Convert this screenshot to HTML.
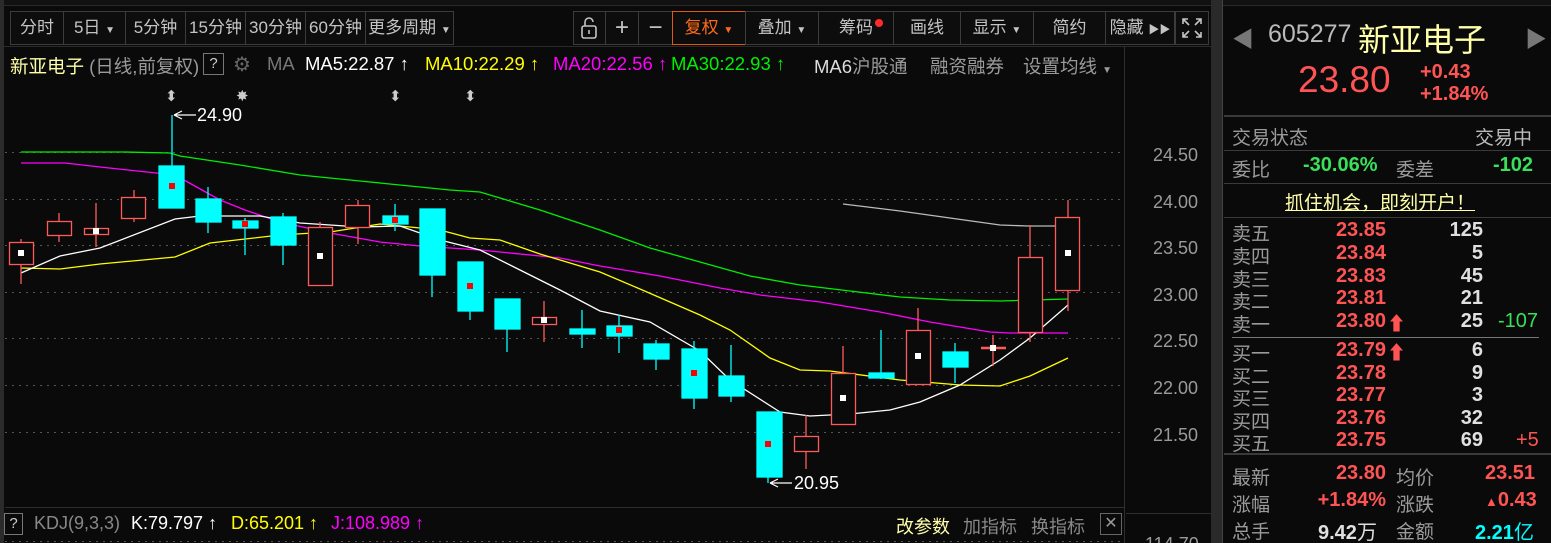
<!DOCTYPE html>
<html style="width:1551px;height:543px;overflow:hidden"><head><meta charset="utf-8"><style>
*{margin:0;padding:0;box-sizing:border-box}
body{width:1551px;height:543px;background:#0a0a0a;overflow:hidden;position:relative;font-family:"Liberation Sans","Noto Sans CJK SC",sans-serif;color:#c8c8c8}
.a{position:absolute;white-space:nowrap}
.btn{position:absolute;top:11px;height:34px;border:1px solid #3c3c3c;font-size:17px;line-height:32px;text-align:center;color:#c4c4c4;background:#0d0d0d}
.g{color:#9a9a9a}.r{color:#ff5454}.gr{color:#39e05a}
.lbl{position:absolute;font-size:19px;color:#9a9a9a;left:1232px}
.pr{position:absolute;font-size:20px;font-weight:bold;color:#ff5454;text-align:right;width:100px;left:1286px}
.vol{position:absolute;font-size:20px;font-weight:bold;color:#e0e0e0;text-align:right;width:60px;left:1423px}
.lg{position:absolute;top:53px;font-size:18.5px;white-space:nowrap}
</style></head><body>
<div class="a" style="left:0;top:0;width:1551px;height:6px;background:#111;border-bottom:1px solid #2a2a2a"></div>
<div class="a" style="left:0;top:0;width:4px;height:543px;background:#2b2b2b"></div>
<div class="btn" style="left:10px;width:54px">分时</div>
<div class="btn" style="left:63px;width:63px">5日 <span style="font-size:10px">▼</span></div>
<div class="btn" style="left:125px;width:61px">5分钟</div>
<div class="btn" style="left:185px;width:61px">15分钟</div>
<div class="btn" style="left:245px;width:61px">30分钟</div>
<div class="btn" style="left:305px;width:61px">60分钟</div>
<div class="btn" style="left:365px;width:89px">更多周期 <span style="font-size:10px">▼</span></div>
<div class="btn" style="left:573px;width:33px;font-size:20px">
<svg width="20" height="24" style="margin-top:4px" viewBox="0 0 20 24"><rect x="2" y="10" width="14" height="12" rx="2" fill="none" stroke="#c4c4c4" stroke-width="1.6"/><path d="M5 10V6a4 4 0 0 1 8 0" fill="none" stroke="#c4c4c4" stroke-width="1.6"/><path d="M9 14v4" stroke="#c4c4c4" stroke-width="1.6"/></svg></div>
<div class="btn" style="left:605px;width:34px;font-size:24px">+</div>
<div class="btn" style="left:638px;width:35px;font-size:24px">−</div>
<div class="btn" style="left:672px;width:74px;border-color:#e05a10;color:#ff6a1a">复权 <span style="font-size:10px">▼</span></div>
<div class="btn" style="left:745px;width:74px">叠加 <span style="font-size:10px">▼</span></div>
<div class="btn" style="left:818px;width:76px">筹码<span style="position:absolute;top:7px;left:56px;width:8px;height:8px;border-radius:4px;background:#ff2a2a"></span></div>
<div class="btn" style="left:893px;width:68px">画线</div>
<div class="btn" style="left:960px;width:74px">显示 <span style="font-size:10px">▼</span></div>
<div class="btn" style="left:1033px;width:73px">简约</div>
<div class="btn" style="left:1105px;width:70px">隐藏 <span style="font-size:11px">▶▶</span></div>
<div class="btn" style="left:1175px;width:34px"><svg width="22" height="22" style="margin-top:5px" viewBox="0 0 22 22" fill="none" stroke="#c4c4c4" stroke-width="1.6"><path d="M2 7V2h5M2 2l6 6M20 7V2h-5M20 2l-6 6M2 15v5h5M2 20l6-6M20 15v5h-5M20 20l-6-6"/></svg></div>
<div class="a" style="left:4px;top:46px;width:1219px;height:1px;background:#2a2a2a"></div>
<div class="lg" style="left:10px;color:#ffffa8">新亚电子 <span style="color:#9a9a9a">(日线,前复权)</span></div>
<div class="a" style="left:203px;top:53px;width:21px;height:22px;border:1px solid #777;font-size:15px;text-align:center;line-height:20px;color:#ccc">?</div>
<div class="a" style="left:233px;top:52px;font-size:20px;color:#666">⚙</div>
<div class="lg" style="left:267px;color:#777">MA</div>
<div class="lg" style="left:305px;color:#fff">MA5:22.87 ↑</div>
<div class="lg" style="left:425px;color:#ffff00">MA10:22.29 ↑</div>
<div class="lg" style="left:553px;color:#ff00ff">MA20:22.56 ↑</div>
<div class="lg" style="left:671px;color:#00f000">MA30:22.93 ↑</div>
<div class="lg" style="left:814px;color:#ddd">MA6<span style="color:#9a9a9a">沪股通</span></div>
<div class="lg" style="left:930px;color:#9a9a9a">融资融券</div>
<div class="lg" style="left:1023px;color:#9a9a9a">设置均线 <span style="font-size:10px">▼</span></div>
<div class="a" style="left:1124px;top:46px;width:1px;height:497px;background:#2e2e2e"></div>
<div class="a" style="left:1211px;top:0;width:12px;height:543px;background:#2a2a2a"></div>
<div class="a" style="left:1222px;top:0;width:1px;height:543px;background:#444"></div>
<svg class="a" style="left:0;top:0" width="1124" height="543">
<g stroke="#555" stroke-dasharray="2,5" stroke-width="1">
<line x1="5" y1="152.5" x2="1124" y2="152.5"/><line x1="5" y1="199.5" x2="1124" y2="199.5"/><line x1="5" y1="245.5" x2="1124" y2="245.5"/><line x1="5" y1="292.5" x2="1124" y2="292.5"/><line x1="5" y1="338.5" x2="1124" y2="338.5"/><line x1="5" y1="385.5" x2="1124" y2="385.5"/><line x1="5" y1="432.5" x2="1124" y2="432.5"/>
<line x1="5" y1="541.5" x2="1124" y2="541.5"/></g>
<line x1="5" y1="507.5" x2="1124" y2="507.5" stroke="#2e2e2e"/>
<g fill="none" stroke-width="1.3">
<polyline stroke="#00ee00" points="21,152 125,152 170,153 180,156 240,165 300,175 370,182 450,190 480,192 540,210 600,230 650,248 700,262 750,276 800,285 850,291 900,297 950,300 1000,301 1068,299"/>
<polyline stroke="#ff00ff" points="21,163 65,163 100,167 175,175 220,200 245,210 280,222 330,233 380,242 420,246 480,250 560,258 600,266 660,276 720,288 760,295 820,302 880,312 930,322 990,332 1010,333 1068,333"/>
<polyline stroke="#ffff00" points="21,268 60,269 100,264 175,257 210,243 280,235 330,232 380,224 440,230 470,238 500,240 540,254 600,272 640,289 700,315 730,330 770,358 800,370 830,371 900,380 960,385 1000,386 1030,376 1068,358"/>
<polyline stroke="#ffffff" points="21,273 60,256 100,248 175,219 200,216 260,216 300,223 360,227 400,226 440,240 480,250 520,270 560,290 600,311 650,322 700,351 730,380 780,412 810,416 850,414 890,410 920,402 960,385 1000,360 1030,338 1068,305"/>
<polyline stroke="#bbbbbb" points="843,204 900,211 950,218 1000,225 1028,226 1068,226"/>
</g>
<g stroke-width="1.3">
<g stroke="#ff5a5a" fill="none">
<line x1="21" y1="239" x2="21" y2="284"/><rect x="9.5" y="242.5" width="24" height="22" fill="#0a0a0a"/>
<line x1="59" y1="213" x2="59" y2="242"/><rect x="47.5" y="221.5" width="24" height="14" fill="#0a0a0a"/>
<line x1="96" y1="203" x2="96" y2="247"/><rect x="84.5" y="228.5" width="24" height="6" fill="#0a0a0a"/>
<line x1="134" y1="190" x2="134" y2="222"/><rect x="121.5" y="197.5" width="24" height="21" fill="#0a0a0a"/>
<line x1="320" y1="222" x2="320" y2="285"/><rect x="308.5" y="227.5" width="24" height="58" fill="#0a0a0a"/>
<line x1="358" y1="200" x2="358" y2="244"/><rect x="345.5" y="205.5" width="24" height="22" fill="#0a0a0a"/>
<line x1="544" y1="301" x2="544" y2="342"/><rect x="532.5" y="317.5" width="24" height="7" fill="#0a0a0a"/>
<line x1="806" y1="415" x2="806" y2="469"/><rect x="794.5" y="436.5" width="24" height="15" fill="#0a0a0a"/>
<line x1="843" y1="346" x2="843" y2="424"/><rect x="831.5" y="373.5" width="24" height="51" fill="#0a0a0a"/>
<line x1="918" y1="308" x2="918" y2="384"/><rect x="906.5" y="330.5" width="24" height="54" fill="#0a0a0a"/>
<line x1="993" y1="335" x2="993" y2="366"/><line x1="981" y1="348" x2="1006" y2="348" stroke-width="2.5"/>
<line x1="1030" y1="225" x2="1030" y2="342"/><rect x="1018.5" y="257.5" width="24" height="75" fill="#0a0a0a"/>
<line x1="1068" y1="200" x2="1068" y2="311"/><rect x="1055.5" y="217.5" width="24" height="73" fill="#0a0a0a"/>
</g>
<g stroke="#00ffff" fill="#00ffff">
<line x1="172" y1="115" x2="172" y2="208"/><rect x="159" y="166" width="25" height="42"/>
<line x1="208" y1="187" x2="208" y2="233"/><rect x="196" y="199" width="25" height="23"/>
<line x1="245" y1="218" x2="245" y2="255"/><rect x="233" y="221" width="25" height="7"/>
<line x1="283" y1="213" x2="283" y2="265"/><rect x="271" y="217" width="25" height="28"/>
<line x1="395" y1="204" x2="395" y2="231"/><rect x="383" y="216" width="25" height="8"/>
<line x1="432" y1="209" x2="432" y2="297"/><rect x="420" y="209" width="25" height="66"/>
<line x1="470" y1="262" x2="470" y2="320"/><rect x="458" y="262" width="25" height="49"/>
<line x1="507" y1="299" x2="507" y2="352"/><rect x="495" y="299" width="25" height="30"/>
<line x1="582" y1="310" x2="582" y2="348"/><rect x="570" y="329" width="25" height="5"/>
<line x1="619" y1="315" x2="619" y2="353"/><rect x="607" y="326" width="25" height="10"/>
<line x1="656" y1="340" x2="656" y2="370"/><rect x="644" y="344" width="25" height="15"/>
<line x1="694" y1="341" x2="694" y2="409"/><rect x="682" y="349" width="25" height="49"/>
<line x1="731" y1="345" x2="731" y2="402"/><rect x="719" y="376" width="25" height="20"/>
<line x1="768" y1="412" x2="768" y2="483"/><rect x="757" y="412" width="25" height="65"/>
<line x1="881" y1="330" x2="881" y2="379"/><rect x="869" y="373" width="25" height="5"/>
<line x1="955" y1="343" x2="955" y2="383"/><rect x="943" y="352" width="25" height="15"/>
</g>
</g>
<g fill="#fff"><rect x="18" y="250" width="6" height="6"/><rect x="93" y="228" width="6" height="6"/><rect x="317" y="253" width="6" height="6"/><rect x="541" y="317" width="6" height="6"/><rect x="840" y="395" width="6" height="6"/><rect x="915" y="353" width="6" height="6"/><rect x="990" y="345" width="6" height="6"/><rect x="1065" y="250" width="6" height="6"/></g>
<g fill="#ff0000"><rect x="169" y="183" width="6" height="6"/><rect x="242" y="221" width="6" height="6"/><rect x="392" y="217" width="6" height="6"/><rect x="467" y="283" width="6" height="6"/><rect x="616" y="327" width="6" height="6"/><rect x="691" y="370" width="6" height="6"/><rect x="765" y="441" width="6" height="6"/></g>
<g stroke="#fff" fill="none" stroke-width="1.2"><path d="M174 115h22M174 115l8-4M174 115l8 4"/><path d="M770 483h22M770 483l8-4M770 483l8 4"/></g>
<text x="197" y="121" fill="#fff" font-size="18" font-family="Liberation Sans">24.90</text>
<text x="794" y="489" fill="#fff" font-size="18" font-family="Liberation Sans">20.95</text>
<g fill="#ccc" font-size="15" font-family="DejaVu Sans"><text x="165" y="101">⬍</text><text x="389" y="101">⬍</text><text x="464" y="101">⬍</text><text x="236" y="101">✸</text></g>
</svg>
<div class="a" style="left:1153px;top:145px;font-size:18px;color:#9a9a9a">24.50</div>
<div class="a" style="left:1153px;top:192px;font-size:18px;color:#9a9a9a">24.00</div>
<div class="a" style="left:1153px;top:238px;font-size:18px;color:#9a9a9a">23.50</div>
<div class="a" style="left:1153px;top:285px;font-size:18px;color:#9a9a9a">23.00</div>
<div class="a" style="left:1153px;top:331px;font-size:18px;color:#9a9a9a">22.50</div>
<div class="a" style="left:1153px;top:378px;font-size:18px;color:#9a9a9a">22.00</div>
<div class="a" style="left:1153px;top:425px;font-size:18px;color:#9a9a9a">21.50</div>
<div class="a" style="left:1145px;top:534px;height:9px;overflow:hidden;font-size:18px;line-height:20px;color:#9a9a9a">114.70</div>
<div class="a" style="left:1126px;top:513px;width:85px;height:1px;background:#2e2e2e"></div>
<div class="a" style="left:4px;top:513px;width:19px;height:22px;border:1px solid #777;font-size:15px;text-align:center;line-height:20px;color:#ccc">?</div>
<div class="a" style="left:34px;top:513px;font-size:18px;color:#888">KDJ(9,3,3)</div>
<div class="a" style="left:131px;top:513px;font-size:18px;color:#fff">K:79.797 ↑</div>
<div class="a" style="left:231px;top:513px;font-size:18px;color:#ffff00">D:65.201 ↑</div>
<div class="a" style="left:331px;top:513px;font-size:18px;color:#ff00ff">J:108.989 ↑</div>
<div class="a" style="left:896px;top:513px;font-size:18px;color:#ffffa8">改参数</div>
<div class="a" style="left:963px;top:513px;font-size:18px;color:#888">加指标</div>
<div class="a" style="left:1031px;top:513px;font-size:18px;color:#888">换指标</div>
<div class="a" style="left:1100px;top:513px;width:22px;height:22px;border:1px solid #666;color:#999;font-size:16px;text-align:center;line-height:20px">✕</div>
<div class="a" style="left:1232px;top:22px;font-size:22px;color:#777">◀</div>
<div class="a" style="left:1525px;top:22px;font-size:22px;color:#777">▶</div>
<div class="a" style="left:1268px;top:20px;font-size:25px;color:#bbb">605277</div>
<div class="a" style="left:1358px;top:15px;font-size:32px;color:#ffffa8">新亚电子</div>
<div class="a" style="left:1298px;top:59px;font-size:37px;color:#ff5454">23.80</div>
<div class="a" style="left:1420px;top:61px;font-size:20px;color:#ff5454;font-weight:bold;line-height:22px">+0.43<br>+1.84%</div>
<div class="a" style="left:1224px;top:115px;width:327px;height:2px;background:#3a3a3a"></div>
<div class="lbl" style="top:123px">交易状态</div>
<div class="a" style="left:1475px;top:123px;font-size:19px;color:#bbb">交易中</div>
<div class="a" style="left:1224px;top:150px;width:327px;height:1px;background:#3a3a3a"></div>
<div class="lbl" style="top:155px">委比</div>
<div class="a gr" style="left:1303px;top:154px;font-size:20px;font-weight:bold">-30.06%</div>
<div class="a" style="left:1396px;top:155px;font-size:19px;color:#9a9a9a">委差</div>
<div class="a gr" style="left:1493px;top:154px;font-size:20px;font-weight:bold">-102</div>
<div class="a" style="left:1224px;top:183px;width:327px;height:1px;background:#3a3a3a"></div>
<div class="a" style="left:1285px;top:188px;font-size:19px;color:#ffffa8;text-decoration:underline">抓住机会，即刻开户！</div>
<div class="a" style="left:1224px;top:217px;width:327px;height:1px;background:#3a3a3a"></div>
<div class="lbl" style="top:219px">卖五</div><div class="pr" style="top:219px">23.85</div><div class="vol" style="top:219px">125</div>
<div class="lbl" style="top:242px">卖四</div><div class="pr" style="top:242px">23.84</div><div class="vol" style="top:242px">5</div>
<div class="lbl" style="top:265px">卖三</div><div class="pr" style="top:265px">23.83</div><div class="vol" style="top:265px">45</div>
<div class="lbl" style="top:287px">卖二</div><div class="pr" style="top:287px">23.81</div><div class="vol" style="top:287px">21</div>
<div class="lbl" style="top:310px">卖一</div><div class="pr" style="top:310px">23.80</div><div class="a r" style="left:1387px;top:309px;font-size:19px;font-weight:bold">⬆</div><div class="vol" style="top:310px">25</div>
<div class="a gr" style="left:1498px;top:310px;font-size:20px">-107</div>
<div class="a" style="left:1232px;top:337px;width:307px;height:1px;background:#777"></div>
<div class="lbl" style="top:339px">买一</div><div class="pr" style="top:339px">23.79</div><div class="a r" style="left:1387px;top:338px;font-size:19px;font-weight:bold">⬆</div><div class="vol" style="top:339px">6</div>
<div class="lbl" style="top:362px">买二</div><div class="pr" style="top:362px">23.78</div><div class="vol" style="top:362px">9</div>
<div class="lbl" style="top:384px">买三</div><div class="pr" style="top:384px">23.77</div><div class="vol" style="top:384px">3</div>
<div class="lbl" style="top:407px">买四</div><div class="pr" style="top:407px">23.76</div><div class="vol" style="top:407px">32</div>
<div class="lbl" style="top:429px">买五</div><div class="pr" style="top:429px">23.75</div><div class="vol" style="top:429px">69</div>
<div class="a r" style="left:1516px;top:429px;font-size:20px">+5</div>
<div class="a" style="left:1224px;top:453px;width:327px;height:2px;background:#3a3a3a"></div>
<div class="lbl" style="top:463px">最新</div><div class="pr" style="top:462px">23.80</div>
<div class="a" style="left:1396px;top:463px;font-size:19px;color:#9a9a9a">均价</div><div class="a r" style="left:1485px;top:462px;font-size:20px;font-weight:bold">23.51</div>
<div class="lbl" style="top:490px">涨幅</div><div class="pr" style="top:489px">+1.84%</div>
<div class="a" style="left:1396px;top:490px;font-size:19px;color:#9a9a9a">涨跌</div><div class="a r" style="left:1485px;top:489px;font-size:20px;font-weight:bold"><span style="font-size:13px">▲</span>0.43</div>
<div class="lbl" style="top:517px">总手</div><div class="a" style="left:1318px;top:516px;font-size:20px;font-weight:bold;color:#e0e0e0">9.42<span style="font-weight:normal">万</span></div>
<div class="a" style="left:1396px;top:517px;font-size:19px;color:#9a9a9a">金额</div><div class="a" style="left:1475px;top:516px;font-size:20px;font-weight:bold;color:#00ffff">2.21<span style="font-weight:normal">亿</span></div>
</body></html>
